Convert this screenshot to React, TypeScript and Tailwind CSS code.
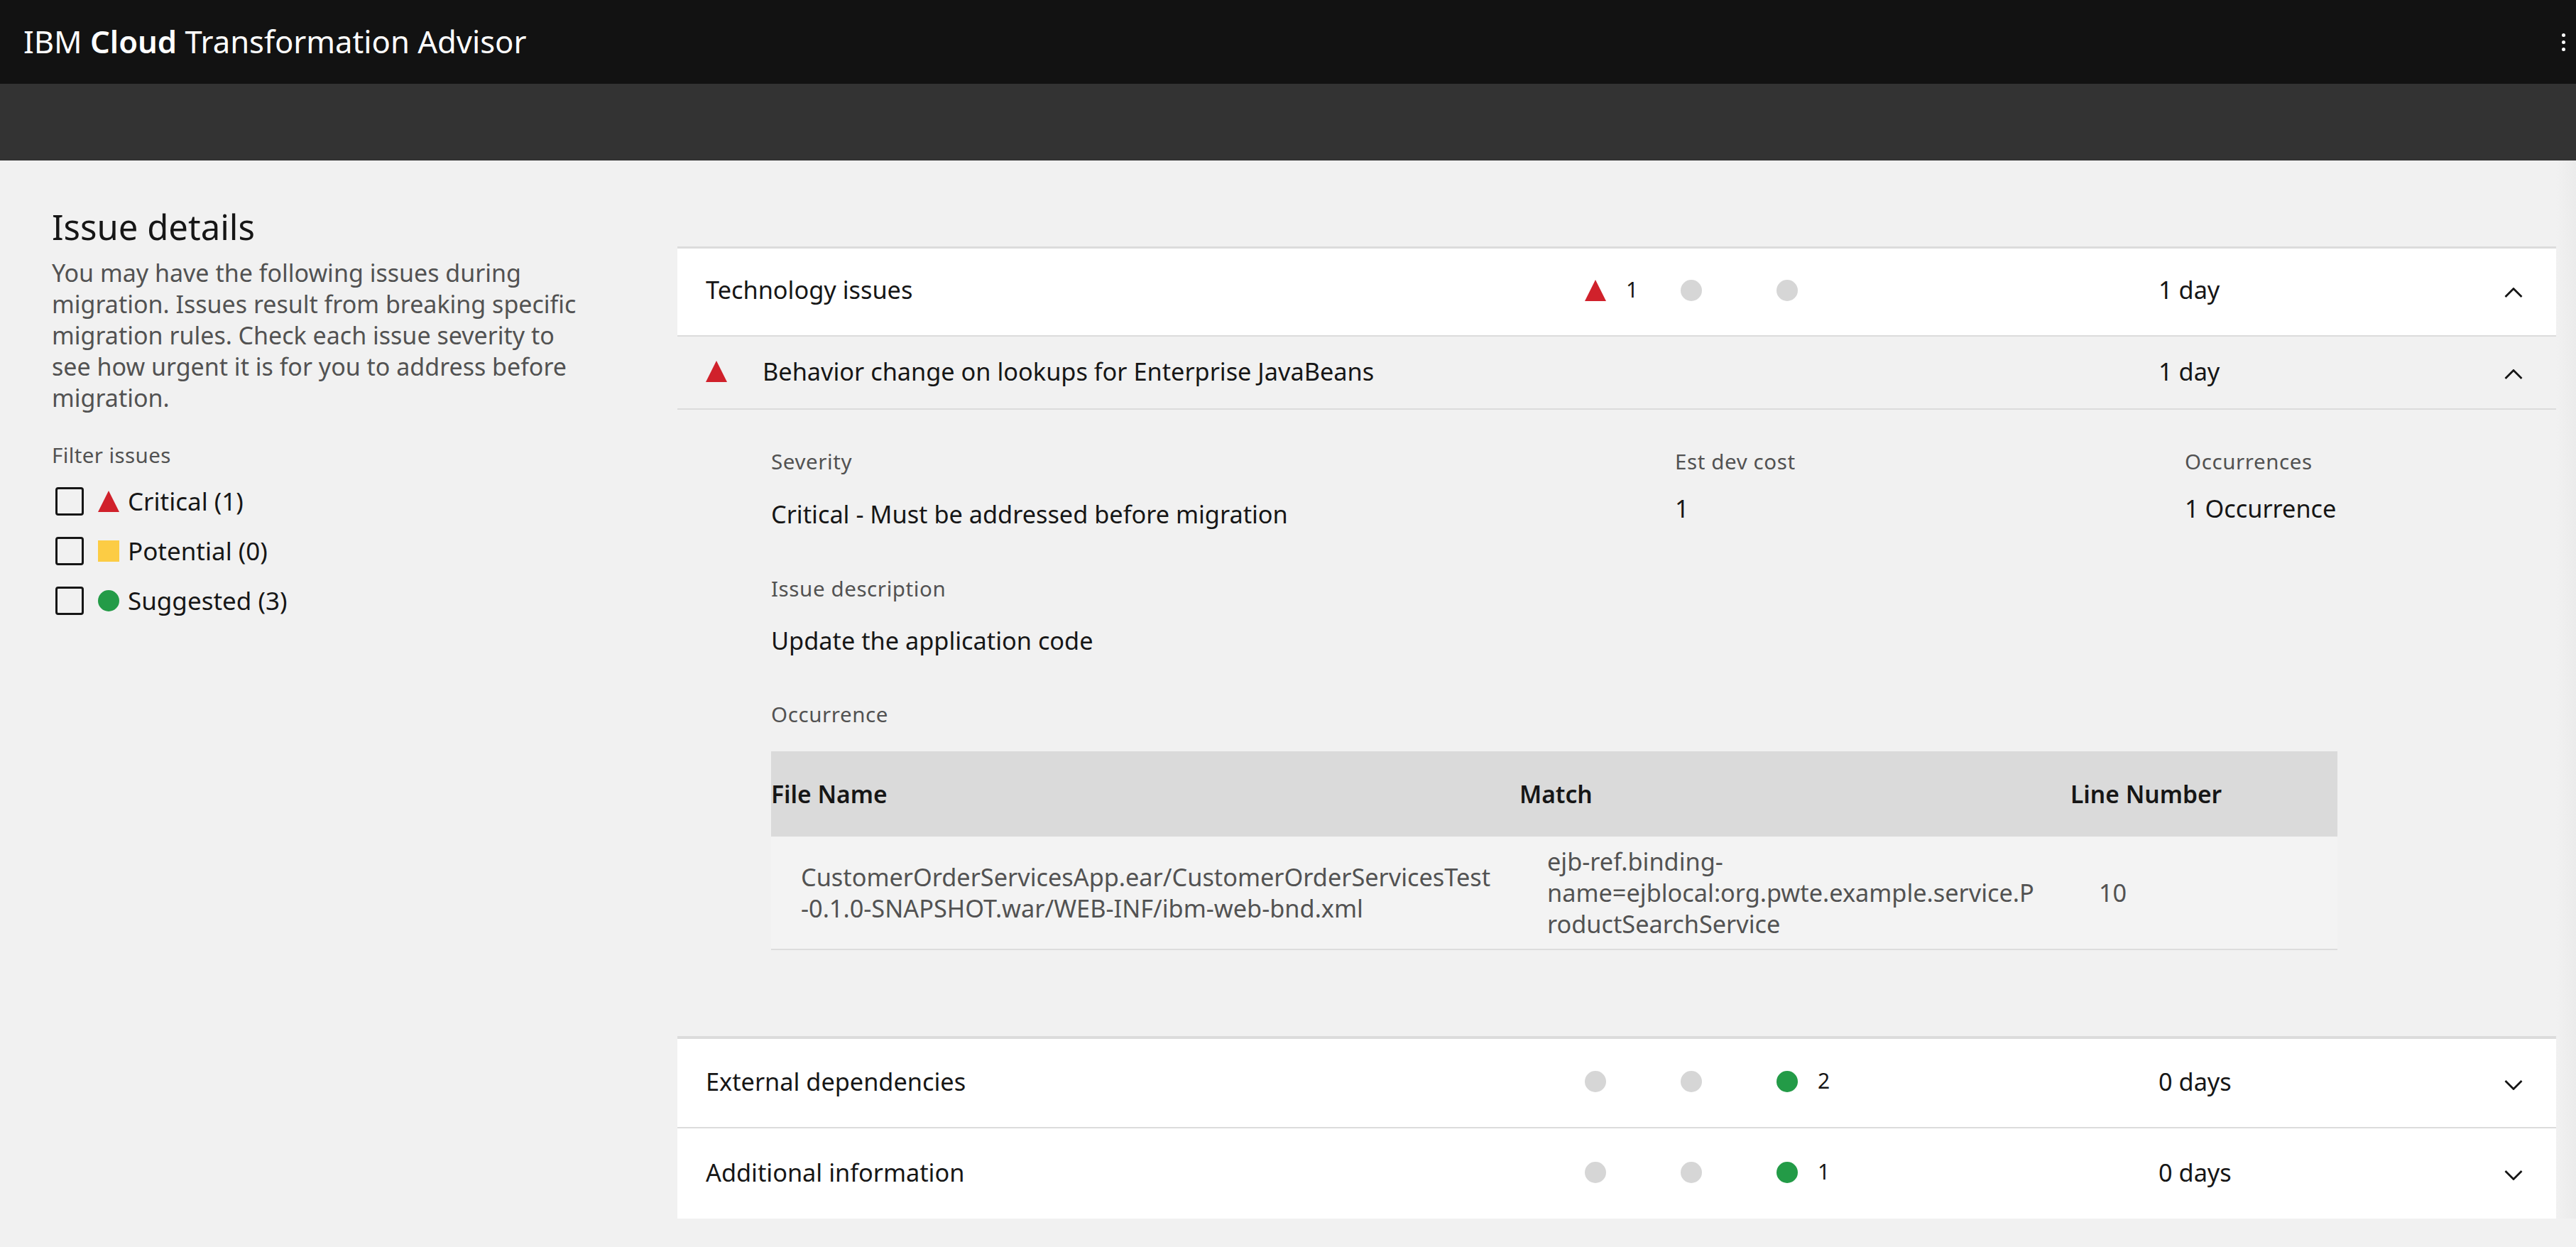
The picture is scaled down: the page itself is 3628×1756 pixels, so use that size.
import React from "react";

const Tri = ({ className = "" }: { className?: string }) => (
  <svg viewBox="0 0 30 30" className={`w-[30px] h-[30px] shrink-0 ${className}`}>
    <polygon points="15,0 30,30 0,30" fill="#d0212b" />
  </svg>
);
const Dot = ({ color }: { color: string }) => (
  <span className={`block w-[30px] h-[30px] rounded-full shrink-0 ${color}`} />
);
const Chevron = ({ up }: { up?: boolean }) => (
  <svg viewBox="0 0 26 14" className="w-[26px] h-[14px]" fill="none" stroke="#161616" strokeWidth="2.8">
    <polyline points={up ? "1.5,13 13,1.5 24.5,13" : "1.5,1 13,12.5 24.5,1"} />
  </svg>
);

const Sev = ({ kind, n }: { kind: "red" | "green" | "off"; n?: number }) => (
  <div className="flex items-center">
    {kind === "red" ? <Tri /> : <Dot color={kind === "green" ? "bg-[#239b47]" : "bg-[#d6d6d6]"} />}
    {n !== undefined && <span className="ml-[28px] text-[30px] -mt-[3px] text-[#161616]">{n}</span>}
  </div>
);

const SummaryRow = ({
  title, a, b, c, days, h, border,
}: {
  title: string; a: React.ReactNode; b: React.ReactNode; c: React.ReactNode; days: string; h: string; border: string;
}) => (
  <div className={`bg-white grid grid-cols-[1278px_135px_135px_538px_1fr] items-center ${h} ${border}`}>
    <div className="pl-[40px] text-[34.3px] text-[#161616] leading-none">{title}</div>
    {a}{b}{c}
    <div className="text-[34.3px] text-[#161616] leading-none">{days}</div>
  </div>
);

const Label = ({ children }: { children: React.ReactNode }) => (
  <div className="text-[29.5px] leading-[40px] text-[#525252] tracking-[0.6px] whitespace-nowrap">{children}</div>
);

const Filter = ({ icon, text }: { icon: React.ReactNode; text: string }) => (
  <div className="flex items-center h-[70px]">
    <span className="block ml-[5px] w-[40px] h-[40px] border-[3px] border-[#161616] rounded-[4px]" />
    <span className="ml-[20px]">{icon}</span>
    <span className="ml-[12px] text-[35px] text-[#161616]">{text}</span>
  </div>
);

export default function App() {
  return (
    <div className="min-h-screen bg-[#f1f1f1] font-['Noto_Sans',sans-serif]">
      <header className="h-[118px] bg-[#121212] flex items-center justify-between pl-[33px] pr-[15px] text-white">
        <div className="text-[43.6px]">IBM <b className="font-semibold">Cloud</b> Transformation Advisor</div>
        <div className="flex flex-col gap-[5px]">
          <span className="block w-[5px] h-[5px] rounded-full bg-white" />
          <span className="block w-[5px] h-[5px] rounded-full bg-white" />
          <span className="block w-[5px] h-[5px] rounded-full bg-white" />
        </div>
      </header>
      <div className="h-[108px] bg-[#333333]" />
      <main className="relative flex">
        <aside className="w-[954px] shrink-0 pl-[73px] pt-[63px]">
          <h1 className="text-[49px] leading-[60px] text-[#161616]">Issue details</h1>
          <p className="mt-[13px] text-[34px] leading-[44px] text-[#525252] whitespace-nowrap">
            You may have the following issues during<br />
            migration. Issues result from breaking specific<br />
            migration rules. Check each issue severity to<br />
            see how urgent it is for you to address before<br />
            migration.
          </p>
          <div className="mt-[39px] text-[29.5px] leading-[40px] text-[#525252] tracking-[0.4px]">Filter issues</div>
          <div className="mt-[10px]">
            <Filter icon={<Tri />} text="Critical (1)" />
            <Filter icon={<span className="block w-[30px] h-[30px] bg-[#fccc44]" />} text="Potential (0)" />
            <Filter icon={<Dot color="bg-[#239b47]" />} text="Suggested (3)" />
          </div>
        </aside>
        <section className="w-[2646px] pt-[121px]">
          <div className="relative">
            <SummaryRow title="Technology issues" h="h-[127px] pb-[5px]" border="border-t-[3px] border-b-[2px] border-[#dcdcdc]"
              a={<Sev kind="red" n={1} />} b={<Sev kind="off" />} c={<Sev kind="off" />} days="1 day" />
            <div className="absolute right-[47px] top-[58px]"><Chevron up /></div>
          </div>
          <div className="relative h-[103px] border-b-[2px] border-[#dcdcdc] flex items-center pl-[40px] pb-[2px]">
            <Tri className="-mt-[2px]" />
            <span className="ml-[50px] text-[34.3px] leading-none text-[#161616]">Behavior change on lookups for Enterprise JavaBeans</span>
            <span className="absolute left-[2086px] text-[34.3px] leading-none text-[#161616]">1 day</span>
            <div className="absolute right-[47px] top-[46px]"><Chevron up /></div>
          </div>

          <div className="pl-[132px] pr-[308px] pt-[53px] pb-[121px]">
            <div className="grid grid-cols-[1273px_718px_1fr]">
              <div>
                <Label>Severity</Label>
                <div className="mt-[32px] text-[34.3px] leading-[44px] text-[#161616]">Critical - Must be addressed before migration</div>
              </div>
              <div>
                <Label>Est dev cost</Label>
                <div className="mt-[24px] text-[34.3px] leading-[44px] text-[#161616]">1</div>
              </div>
              <div>
                <Label>Occurrences</Label>
                <div className="mt-[24px] text-[34.3px] leading-[44px] text-[#161616] whitespace-nowrap">1 Occurrence</div>
              </div>
            </div>
            <div className="mt-[63px]"><Label>Issue description</Label></div>
            <div className="mt-[31px] text-[34.3px] leading-[44px] text-[#161616]">Update the application code</div>
            <div className="mt-[62px]"><Label>Occurrence</Label></div>
            <div className="mt-[32px]">
              <div className="grid grid-cols-[1054px_776px_1fr] bg-[#dadada] h-[120px] items-center text-[33.6px] font-semibold text-[#161616]">
                <div>File Name</div>
                <div>Match</div>
                <div>Line Number</div>
              </div>
              <div className="grid grid-cols-[1054px_776px_1fr] bg-[#f3f3f3] h-[160px] items-center border-b-[2px] border-[#dcdcdc] text-[34.3px] leading-[44px] text-[#525252]">
                <div className="pl-[42px] whitespace-nowrap">CustomerOrderServicesApp.ear/CustomerOrderServicesTest<br />-0.1.0-SNAPSHOT.war/WEB-INF/ibm-web-bnd.xml</div>
                <div className="pl-[39px] whitespace-nowrap">ejb-ref.binding-<br />name=ejblocal:org.pwte.example.service.P<br />roductSearchService</div>
                <div className="pl-[40px]">10</div>
              </div>
            </div>
          </div>

          <div className="relative">
            <SummaryRow title="External dependencies" h="h-[130px] pb-[4px]" border="border-t-[4px] border-b-[2px] border-[#dcdcdc]"
              a={<Sev kind="off" />} b={<Sev kind="off" />} c={<Sev kind="green" n={2} />} days="0 days" />
            <div className="absolute right-[47px] top-[62px]"><Chevron /></div>
          </div>
          <div className="relative">
            <SummaryRow title="Additional information" h="h-[127px] pb-[3px]" border=""
              a={<Sev kind="off" />} b={<Sev kind="off" />} c={<Sev kind="green" n={1} />} days="0 days" />
            <div className="absolute right-[47px] top-[59px]"><Chevron /></div>
          </div>
        </section>
        <div className="absolute right-0 top-0 bottom-0 w-[28px] bg-linear-to-r from-transparent to-[#ebebeb]" />
      </main>
    </div>
  );
}
